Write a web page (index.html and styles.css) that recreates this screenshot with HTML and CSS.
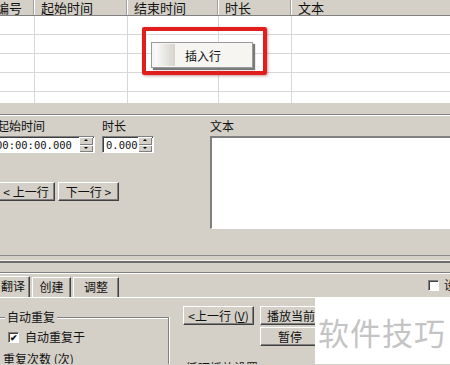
FILE: index.html
```html
<!DOCTYPE html>
<html lang="zh-CN">
<head>
  <meta charset="UTF-8" />
  <title>字幕编辑</title>
  <link rel="stylesheet" href="styles.css">
</head>
<body>
  <div class="list">
    <div class="list-head">
      <div class="hcell c1">编号</div>
      <div class="hcell">起始时间</div>
      <div class="hcell">结束时间</div>
      <div class="hcell">时长</div>
      <div class="hcell last">文本</div>
    </div>
    <div class="list-body">
      <div class="row"><div class="cell"></div><div class="cell"></div><div class="cell"></div><div class="cell"></div><div class="cell last"></div></div>
      <div class="row"><div class="cell"></div><div class="cell"></div><div class="cell"></div><div class="cell"></div><div class="cell last"></div></div>
      <div class="row"><div class="cell"></div><div class="cell"></div><div class="cell"></div><div class="cell"></div><div class="cell last"></div></div>
      <div class="row"><div class="cell"></div><div class="cell"></div><div class="cell"></div><div class="cell"></div><div class="cell last"></div></div>
      <div class="row"><div class="cell"></div><div class="cell"></div><div class="cell"></div><div class="cell"></div><div class="cell last"></div></div>
    </div>

    <!-- 右键菜单（红框标注） -->
    <div class="mark">
      <div class="menu">
        <span class="gutter"></span>
        <span class="menu-text">插入行</span>
      </div>
    </div>
  </div>

  <div class="strip"></div>

  <div class="editor">
    <div class="fields">
      <div class="field-row">
        <div class="field start">
          <div class="label">起始时间</div>
          <div class="spinbox wide">
            <span class="value">00:00:00.000</span>
            <span class="spin"><i class="up"></i><i class="down"></i></span>
          </div>
        </div>
        <div class="field">
          <div class="label">时长</div>
          <div class="spinbox narrow">
            <span class="value">0.000</span>
            <span class="spin"><i class="up"></i><i class="down"></i></span>
          </div>
        </div>
      </div>
      <div class="nav-row">
        <button class="btn prev">&lt; 上一行</button>
        <button class="btn next">下一行 &gt;</button>
      </div>
    </div>
    <div class="text-col">
      <div class="label">文本</div>
      <div class="textbox"></div>
    </div>
  </div>

  <div class="splitter">
    <div class="split-a"></div>
    <div class="split-b"></div>
  </div>

  <div class="tabs">
    <div class="tab active">翻译</div>
    <div class="tab t2">创建</div>
    <div class="tab t3">调整</div>
    <label class="tab-check"><span class="box"></span>设置</label>
  </div>

  <div class="tab-page">
    <div class="group">
      <div class="legend">自动重复</div>
      <div class="check-line"><span class="box checked">✔</span>自动重复于</div>
      <div class="plain">重复次数 (次)</div>
    </div>
    <div class="actions">
      <div class="act-row">
        <button class="btn small">&lt;上一行 (<u>V</u>)</button>
        <button class="btn small play">播放当前行</button>
      </div>
      <div class="act-row second">
        <button class="btn small pause">暂停</button>
      </div>
      <div class="plain tail">循环播放设置</div>
    </div>
    <div class="watermark">软件技巧</div>
  </div>
</body>
</html>
```

FILE: styles.css
```css
body {
  margin: 0;
  width: 450px;
  height: 365px;
  overflow: hidden;
  position: relative;
  background: #d4d0c8;
  font-family: "Noto Sans CJK SC", sans-serif;
  font-size: 12px;
  color: #111;
}

/* 列表 */
.list {
  position: relative;
  background: #fff;
  height: 103px;
  overflow: hidden;
}

.list-head,
.row {
  display: grid;
  grid-template-columns: 35px 93px 91px 73px 1fr;
}

.list-head {
  height: 16px;
  background: #d4d0c8;
  border-bottom: 1px solid #808080;
  box-sizing: border-box;
}

.hcell {
  font-size: 13px;
  line-height: 15px;
  padding-left: 6px;
  border-right: 1px solid #fff;
  box-shadow: inset -1px 0 0 #a0a0a0;
  white-space: nowrap;
  overflow: hidden;
}

.hcell.c1 {
  padding-left: 0;
  text-indent: -4px;
}

.hcell.last {
  border-right: none;
  box-shadow: none;
}

.row {
  height: 19px;
}

.cell {
  border-right: 1px solid #d8d8d8;
  border-bottom: 1px solid #d8d8d8;
}

.cell.last {
  border-right: none;
}

/* 红框 + 菜单 */
.mark {
  position: absolute;
  left: 142px;
  top: 27px;
  width: 117px;
  height: 40px;
  border: 4px solid #e01e1e;
  border-radius: 2px;
  box-shadow: 1px 1px 3px rgba(120, 0, 0, 0.4);
}

.menu {
  margin: 11px 0 0 5px;
  width: 100px;
  height: 24px;
  display: flex;
  align-items: center;
  background: #f6f5f2;
  border: 1px solid #9a9a9a;
  box-shadow: 2px 2px 1px #7a7a7a;
}

.gutter {
  width: 20px;
  height: 22px;
  margin-left: 3px;
  background: linear-gradient(to right, #fbfbfa, #d6d3cc);
}

.menu-text {
  margin-left: 10px;
  font-size: 12px;
}

.strip {
  height: 11px;
  border-bottom: 1px solid #808080;
}

/* 编辑区 */
.editor {
  display: flex;
  box-sizing: border-box;
  border-top: 1px solid #fff;
  height: 114px;
  padding-top: 3px;
}

.fields {
  width: 210px;
}

.label {
  line-height: 14px;
  height: 17px;
}

.field-row {
  display: flex;
  gap: 7px;
}

.field.start {
  margin-left: -3px;
}

.spinbox {
  display: flex;
  align-items: center;
  height: 17px;
  box-sizing: border-box;
  background: #fff;
  border-top: 1px solid #808080;
  border-left: 1px solid #808080;
  border-right: 1px solid #fff;
  border-bottom: 1px solid #fff;
  box-shadow: inset 1px 1px 0 #404040;
  overflow: hidden;
}

.spinbox.wide {
  width: 98px;
}

.spinbox.narrow {
  width: 52px;
}

.value {
  flex: 1;
  font-family: "DejaVu Sans Mono", monospace;
  font-size: 10.5px;
  padding-left: 3px;
  white-space: nowrap;
}

.spinbox.wide .value {
  padding-left: 0;
  text-indent: -2px;
}

.spin {
  width: 14px;
  height: 15px;
  margin-right: 1px;
  display: flex;
  flex-direction: column;
  background: #d4d0c8;
}

.spin i {
  flex: 1;
  position: relative;
  box-shadow: inset 1px 1px 0 #fff, inset -1px -1px 0 #808080;
}

.spin i::after {
  content: "";
  position: absolute;
  left: 5px;
  top: 2px;
  border-left: 2px solid transparent;
  border-right: 2px solid transparent;
}

.spin .up::after {
  border-bottom: 2px solid #000;
}

.spin .down::after {
  border-top: 2px solid #000;
}

.nav-row {
  display: flex;
  gap: 3px;
  margin-top: 29px;
  margin-left: -3px;
}

.btn {
  font-family: "Noto Sans CJK SC", sans-serif;
  font-size: 12px;
  color: #111;
  background: #d4d0c8;
  border: 1px solid;
  border-color: #fff #404040 #404040 #fff;
  box-shadow: inset -1px -1px 0 #808080;
  padding: 0;
  height: 19px;
  line-height: 15px;
}

.btn.prev {
  width: 58px;
}

.btn.next {
  width: 61px;
}

.text-col {
  flex: 1;
}

.textbox {
  height: 93px;
  box-sizing: border-box;
  background: #fff;
  border-top: 2px solid #808080;
  border-left: 2px solid #808080;
  border-bottom: 1px solid #fff;
}

/* 分隔条 */
.splitter {
  padding-top: 26px;
}

.split-a {
  border-top: 1px solid #8c8c8c;
  border-bottom: 1px solid #f4f3ef;
  height: 4px;
}

.split-b {
  border-top: 2px solid #6e6e6e;
  height: 9px;
  border-bottom: 1px solid #808080;
}

/* 选项卡 */
.tabs {
  display: flex;
  align-items: flex-end;
  height: 24px;
  border-top: 1px solid #fff;
  box-sizing: border-box;
}

.tab {
  box-sizing: border-box;
  height: 20px;
  line-height: 18px;
  text-align: center;
  border: 1px solid;
  border-color: #fff #404040 transparent #fff;
  box-shadow: inset -1px 0 0 #808080;
  border-bottom: none;
  margin-right: 2px;
}

.tab.active {
  margin-left: -14px;
  width: 44px;
  padding-left: 10px;
  height: 21px;
}

.tab.t2 {
  width: 39px;
}

.tab.t3 {
  width: 46px;
}

.tab-check {
  margin-left: auto;
  margin-right: -18px;
  align-self: flex-start;
  margin-top: 4px;
  display: flex;
  align-items: center;
  gap: 5px;
  line-height: 14px;
}

.box {
  width: 11px;
  height: 11px;
  box-sizing: border-box;
  background: #fff;
  border-top: 1px solid #808080;
  border-left: 1px solid #808080;
  border-right: 1px solid #fff;
  border-bottom: 1px solid #fff;
  box-shadow: inset 1px 1px 0 #404040;
  font-size: 9px;
  line-height: 9px;
  text-align: center;
  font-weight: bold;
}

/* 选项卡页 */
.tab-page {
  position: relative;
  display: flex;
  border-top: 1px solid #fff;
  height: 66px;
  overflow: hidden;
}

.group {
  width: 168px;
  margin-top: 19px;
  border-top: 1px solid #808080;
  border-right: 1px solid #808080;
  box-shadow: inset 0 1px 0 #fff, 1px 0 0 #fff;
}

.legend {
  margin: -8px 0 0 5px;
  padding: 0 2px;
  background: #d4d0c8;
  width: max-content;
  line-height: 14px;
}

.check-line {
  display: flex;
  align-items: center;
  gap: 6px;
  margin: 6px 0 0 8px;
  line-height: 14px;
}

.plain {
  line-height: 14px;
  white-space: nowrap;
}

.group .plain {
  margin: 8px 0 0 3px;
}

.actions {
  margin-left: 14px;
  padding-top: 8px;
}

.act-row {
  display: flex;
  gap: 6px;
}

.btn.small {
  width: 71px;
  height: 19px;
}

.btn.play {
  width: 74px;
}

.act-row.second {
  margin-top: 2px;
  padding-left: 77px;
}

.btn.pause {
  width: 60px;
}

.plain.tail {
  margin: 15px 0 0 3px;
}

.watermark {
  position: absolute;
  left: 315px;
  top: 0;
  right: 0;
  bottom: 0;
  background: #fff;
  color: #c4c4c4;
  font-size: 31px;
  line-height: 36px;
  padding: 16px 0 0 3px;
  letter-spacing: 1px;
  white-space: nowrap;
}
```
